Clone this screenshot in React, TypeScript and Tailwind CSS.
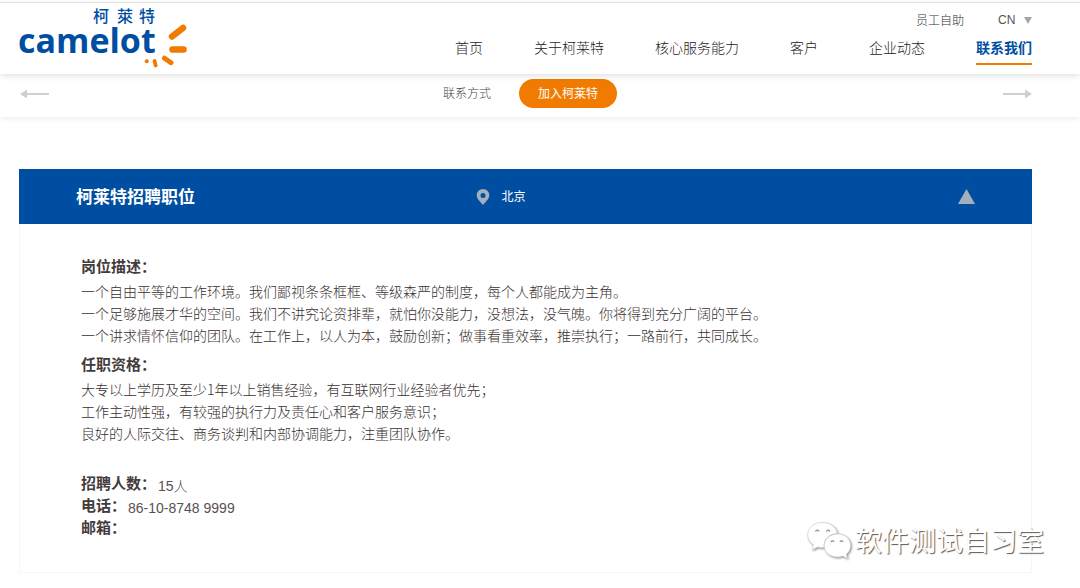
import * as React from 'react';
import { clsx } from 'clsx';

interface NavItem {
  label: string;
  active?: boolean;
}

const NAV_ITEMS: NavItem[] = [
  { label: '首页' },
  { label: '关于柯莱特' },
  { label: '核心服务能力' },
  { label: '客户' },
  { label: '企业动态' },
  { label: '联系我们', active: true },
];

const JOB_SECTIONS = [
  {
    title: '岗位描述：',
    lines: [
      '一个自由平等的工作环境。我们鄙视条条框框、等级森严的制度，每个人都能成为主角。',
      '一个足够施展才华的空间。我们不讲究论资排辈，就怕你没能力，没想法，没气魄。你将得到充分广阔的平台。',
      '一个讲求情怀信仰的团队。在工作上，以人为本，鼓励创新；做事看重效率，推崇执行；一路前行，共同成长。',
    ],
  },
  {
    title: '任职资格：',
    lines: [
      '大专以上学历及至少1年以上销售经验，有互联网行业经验者优先；',
      '工作主动性强，有较强的执行力及责任心和客户服务意识；',
      '良好的人际交往、商务谈判和内部协调能力，注重团队协作。',
    ],
  },
];

const CONTACTS = [
  { label: '招聘人数：', value: '15人' },
  { label: '电话：', value: '86-10-8748 9999' },
  { label: '邮箱：', value: '' },
];

function Logo() {
  return (
    <svg
      className="h-16 w-[172px] overflow-visible"
      viewBox="0 0 172 64"
      role="img"
      aria-label="camelot"
    >
      <text
        x="76 100 122"
        y="15"
        fill="#004ea2"
        className="text-[16px] font-medium font-['Noto_Sans_CJK_TC',sans-serif]"
      >
        柯萊特
      </text>
      <text
        x="1"
        y="46"
        fill="#004ea2"
        className="text-[34px] font-bold font-['Open_Sans',sans-serif]"
      >
        camelot
      </text>
      {/* Sun rays */}
      <g stroke="#f07b00" strokeLinecap="round" fill="none">
        <path d="M155 29.500L166 21" strokeWidth="6.500" />
        <path d="M155.500 42.500H166.500" strokeWidth="6.500" />
        <path d="M147.500 51.200L154 55.700" strokeWidth="5" />
        <path d="M137.500 54L138.700 58.500" strokeWidth="3.800" />
        <path d="M129.700 54.300H129.800" strokeWidth="4" />
      </g>
    </svg>
  );
}

function Arrow({ flip = false }: { flip?: boolean }) {
  return (
    <svg
      className={clsx('h-2.5 w-[29px] text-[#cfcfcf]', flip && 'rotate-180')}
      viewBox="0 0 29 10"
      fill="currentColor"
    >
      <path d="M0 5L7 0.500V4H29V6H7V9.500Z" />
    </svg>
  );
}

function Header() {
  return (
    <header className="relative z-10 mt-0.5 flex h-[72px] justify-between border-t border-[#e2e2e2] bg-white pl-[17px] pr-12 shadow-[0_2px_6px_rgba(0,0,0,0.12)]">
      <a href="#" className="pt-1">
        <Logo />
      </a>
      <div className="flex flex-col items-end pt-2">
        <div className="flex h-[18px] items-center gap-[34px] text-xs text-[#333]">
          <a href="#">员工自助</a>
          <div className="relative flex items-center">
            <select
              aria-label="Language"
              className="w-[34px] appearance-none bg-transparent font-['Liberation_Sans',sans-serif] text-[#555]"
            >
              <option>CN</option>
            </select>
            <svg
              className="pointer-events-none absolute right-0 h-[7px] w-2 text-[#a5a5a5]"
              viewBox="0 0 8 7"
              fill="currentColor"
            >
              <path d="M0 0H8L4 7Z" />
            </svg>
          </div>
        </div>
        <nav className="flex gap-[51px] pt-2 text-sm text-[#222]">
          {NAV_ITEMS.map((item) => (
            <a
              key={item.label}
              href="#"
              className={clsx(
                'whitespace-nowrap border-b-2 pb-1.5 leading-5',
                item.active
                  ? 'border-[#f07b00] font-bold text-[#004ea2]'
                  : 'border-transparent'
              )}
            >
              {item.label}
            </a>
          ))}
        </nav>
      </div>
    </header>
  );
}

function SubNav() {
  return (
    <div className="flex h-[43px] items-center justify-between bg-white pb-1 pl-5 pr-12 shadow-[0_2px_5px_rgba(0,0,0,0.07)]">
      <button type="button" aria-label="Previous">
        <Arrow />
      </button>
      <nav className="flex items-center gap-7 pl-2 text-xs text-[#444]">
        <a href="#" className="pb-0.5">
          联系方式
        </a>
        <a
          href="#"
          className="rounded-full bg-[#f07b00] px-[19px] pb-0.5 font-normal leading-[27px] text-white"
        >
          加入柯莱特
        </a>
      </nav>
      <button type="button" aria-label="Next">
        <Arrow flip />
      </button>
    </div>
  );
}

function JobCard() {
  return (
    <article className="ml-[19px] mr-12 mt-[52px]">
      <div className="grid h-[55px] grid-cols-[4fr_5fr] items-center bg-[#004ea2] px-[57px] text-white">
        <h2 className="pb-0.5 text-[17px] font-bold">柯莱特招聘职位</h2>
        <div className="flex items-center justify-between">
          <p className="flex items-center gap-3 text-xs font-normal">
            <svg className="h-4 w-3.5 text-[#a3afbd]" viewBox="0 0 14 16" fill="currentColor">
              <path
                fillRule="evenodd"
                d="M7 0A6.300 6.300 0 0 0 0.700 6.300C0.700 10 4.500 13 7 16C9.500 13 13.300 10 13.300 6.300A6.300 6.300 0 0 0 7 0ZM7 3.900A2.500 2.500 0 1 1 7 8.900A2.500 2.500 0 1 1 7 3.900Z"
              />
            </svg>
            <span className="pb-0.5">北京</span>
          </p>
          <button type="button" aria-label="Collapse">
            <svg className="h-[15px] w-[17px] text-[#a3afbd]" viewBox="0 0 17 15" fill="currentColor">
              <path d="M8.500 0L17 15H0Z" />
            </svg>
          </button>
        </div>
      </div>

      <div className="border-x border-b border-[#f7f7f7] px-[61px] pb-[34px] pt-[30px] text-sm leading-[22px] text-[#3a3030]">
        {JOB_SECTIONS.map((section) => (
          <section key={section.title} className="mb-1.5">
            <h3 className="mb-0.5 text-[15px] leading-6 font-bold text-[#443b3b]">
              {section.title}
            </h3>
            {section.lines.map((line) => (
              <p key={line}>{line}</p>
            ))}
          </section>
        ))}

        <dl className="mt-7">
          {CONTACTS.map((contact) => (
            <div key={contact.label} className="flex items-end gap-0.5">
              <dt className="text-[15px] leading-[22px] font-bold text-[#443b3b]">
                {contact.label}
              </dt>
              <dd className="font-['Liberation_Sans','Noto_Sans_CJK_SC',sans-serif] leading-4 text-[#595050]">
                {contact.value}
              </dd>
            </div>
          ))}
        </dl>
      </div>
    </article>
  );
}

function Watermark() {
  return (
    <div className="pointer-events-none absolute bottom-7 right-9 flex items-center gap-1">
      <svg
        className="h-10 w-11 overflow-visible drop-shadow-[1px_1px_1px_rgba(0,0,0,0.45)]"
        viewBox="0 0 44 40"
      >
        <g fill="#fff" stroke="#c8c8c8" strokeWidth="0.500">
          <path d="M15 2.500C7 2.500 0.800 8 0.800 14.800C0.800 19 3 22.500 6.500 24.800L5 30L10.800 27C13 27.600 15 27.700 17 27.400C16 19 23 13.500 30.500 13.500C29 7 23 2.500 15 2.500Z" />
          <path d="M30.500 14C23 14 17.200 19 17.200 25.500C17.200 32 23 37 30.500 37C32.500 37 34.300 36.600 36 36L40.500 38.500L39.300 34.300C42 32.200 43.600 29 43.600 25.500C43.600 19 38 14 30.500 14Z" />
        </g>
        <g fill="none" stroke="#909090" strokeWidth="1.200">
          <path d="M8.500 11.500A1.800 1.800 0 0 1 12 11.500" />
          <path d="M19.500 11.500A1.800 1.800 0 0 1 23 11.500" />
          <path d="M24 22A1.600 1.600 0 0 1 27 22" />
          <path d="M33 22A1.600 1.600 0 0 1 36 22" />
        </g>
      </svg>
      <span className="text-[27px] font-normal leading-10 text-white [text-shadow:1px_1px_1px_rgba(0,0,0,0.65)]">
        软件测试自习室
      </span>
    </div>
  );
}

export default function App() {
  return (
    <div className="relative flow-root min-h-screen bg-white font-light font-['Noto_Sans_CJK_SC',sans-serif]">
      <Header />
      <SubNav />
      <main>
        <JobCard />
      </main>
      <Watermark />
    </div>
  );
}
